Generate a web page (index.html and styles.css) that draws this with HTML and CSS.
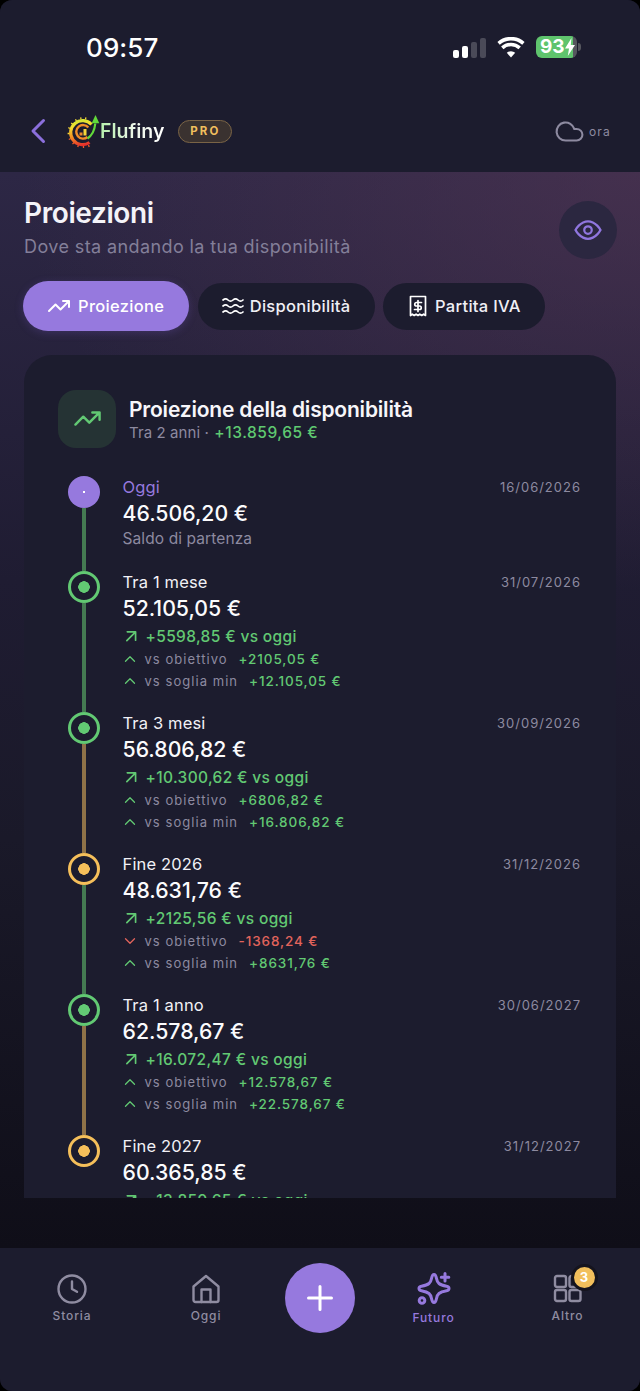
FILE: index.html
```html
<!DOCTYPE html>
<html lang="it">
<head>
<meta charset="utf-8">
<title>Flufiny – Proiezioni</title>
<link rel="stylesheet" href="styles.css">
</head>
<body>
<svg class="defs" width="0" height="0" aria-hidden="true">
  <defs>
    <linearGradient id="gauge" x1="0.7" y1="1" x2="0.5" y2="0">
      <stop offset="0" stop-color="#e5302c"/>
      <stop offset=".4" stop-color="#f48a22"/>
      <stop offset=".8" stop-color="#f6dd2e"/>
      <stop offset="1" stop-color="#d8e634"/>
    </linearGradient>
    <symbol id="i-up-right" viewBox="0 0 24 24"><path d="M7.500 7h10v10M7 17.500 17.500 7"/></symbol>
    <symbol id="i-chev-up" viewBox="0 0 24 24"><path d="m6 15 6-6 6 6"/></symbol>
    <symbol id="i-chev-down" viewBox="0 0 24 24"><path d="m6 9 6 6 6-6"/></symbol>
    <symbol id="i-trend" viewBox="0 0 24 24"><path d="M2 17 8.500 10.500 13.500 15.500 22 7M16 7h6v6"/></symbol>
  </defs>
</svg>
<div class="screen">
  <header class="top">
    <div class="status">
      <span class="time">09:57</span>
      <div class="status-icons">
        <div class="signal"><i class="b1"></i><i class="b2"></i><i class="b3"></i><i class="b4"></i></div>
        <svg class="wifi" viewBox="0 0 28 21" width="28" height="21"><path d="M14 20.500 9.800 15.800a6.200 6.200 0 0 1 8.400 0Z"/><path class="arc" d="M5.300 10.800a13 13 0 0 1 17.400 0M1.600 6.300a18.800 18.800 0 0 1 24.800 0" /></svg>
        <div class="battery"><div class="batt-body"><span>93</span><svg viewBox="0 0 10 18" width="10" height="18"><path d="M6.500 0 0 10.500h4L2.800 18 10 7H5.800Z"/></svg></div><i class="batt-tip"></i></div>
      </div>
    </div>
    <div class="brandbar">
      <div class="brand">
        <svg class="back" viewBox="0 0 16 26" width="16" height="26"><path d="M13.500 2.500 3 13l10.500 10.500"/></svg>
        <div class="logo">
          <svg viewBox="0 0 34 34" width="34" height="34">
            <g class="rays-top"><path d="M2.800 19.500H.6M3.300 14.500l-2-.8M5.800 10.300 4.200 8.900M9.500 7.200 8.500 5.300M14 5.500l-.3-2.200M18.500 5.500l.4-2.200"/></g>
            <g class="rays-low"><path d="M3.800 24.500l-2 1M7 28.500l-1.500 1.600M11.500 31l-.8 2M16.500 31.800V34M21.500 31l.7 2"/></g>
            <path class="arc1" d="M22.500 28.500A12 12 0 1 1 24.500 10.500"/>
            <path class="arc2" d="M20.500 23a6.800 6.800 0 1 1 .8-9.500"/>
            <path class="needle" d="M20.500 24.500c4.500-3 7-7.500 7.800-15"/>
            <path class="tip" d="M28.500 1l3.800 8.200h-7.600Z"/>
            <rect class="bar1" x="12.500" y="18.500" width="3" height="3"/>
            <rect class="bar2" x="16.500" y="15" width="3" height="6.500"/>
          </svg>
          <span class="logo-text">Flufiny</span>
        </div>
        <span class="pro">PRO</span>
      </div>
      <div class="sync">
        <svg viewBox="0 0 24 24" width="31" height="31"><path d="M17.500 19H9a7 7 0 1 1 6.710-9h1.790a4.500 4.500 0 1 1 0 9Z"/></svg>
        <span>ora</span>
      </div>
    </div>
  </header>

  <main class="main">
    <div class="heading">
      <div>
        <h1>Proiezioni</h1>
        <p>Dove sta andando la tua disponibilità</p>
      </div>
      <button class="eye" type="button" aria-label="Mostra">
        <svg viewBox="0 0 24 24" width="30" height="30"><path d="M2 12s3.600-7 10-7 10 7 10 7-3.600 7-10 7-10-7-10-7Z"/><circle cx="12" cy="12" r="3"/></svg>
      </button>
    </div>

    <nav class="tabs">
      <a class="tab tab-on"><svg viewBox="0 0 24 24" width="24" height="24"><use href="#i-trend"/></svg>Proiezione</a>
      <a class="tab"><svg viewBox="0 0 24 24" width="24" height="24"><path d="M2 6c2-1.600 3.300-1.600 5 0s3.300 1.600 5 0 3.300-1.600 5 0 3.300 1.600 5 0M2 12c2-1.600 3.300-1.600 5 0s3.300 1.600 5 0 3.300-1.600 5 0 3.300 1.600 5 0M2 18c2-1.600 3.300-1.600 5 0s3.300 1.600 5 0 3.300-1.600 5 0 3.300 1.600 5 0"/></svg>Disponibilità</a>
      <a class="tab"><svg viewBox="0 0 24 24" width="24" height="24"><path d="M4.500 2.500h15v19l-1.900-1.300-1.900 1.300-1.900-1.300-1.800 1.300-1.900-1.300-1.900 1.300-1.900-1.300-1.800 1.300ZM15.500 8.500h-5a1.700 1.700 0 0 0 0 3.500h3a1.700 1.700 0 0 1 0 3.500h-5M12 6.500v11"/></svg>Partita IVA</a>
    </nav>

    <div class="clip">
      <section class="card">
        <div class="card-head">
          <div class="card-icon"><svg viewBox="0 0 24 24" width="29" height="29"><use href="#i-trend"/></svg></div>
          <div class="card-title">
            <h2>Proiezione della disponibilità</h2>
            <p>Tra 2 anni · <b>+13.859,65 €</b></p>
          </div>
        </div>

        <ol class="timeline">
          <li class="item item-first line-g">
            <div class="rail"><span class="dot dot-p"></span><span class="line"></span></div>
            <div class="body">
              <div class="row"><span class="label label-p">Oggi</span><time>16/06/2026</time></div>
              <div class="amount">46.506,20 €</div>
              <div class="note">Saldo di partenza</div>
            </div>
          </li>

          <li class="item line-g">
            <div class="rail"><span class="dot dot-g"></span><span class="line"></span></div>
            <div class="body">
              <div class="row"><span class="label">Tra 1 mese</span><time>31/07/2026</time></div>
              <div class="amount">52.105,05 €</div>
              <div class="delta"><svg viewBox="0 0 24 24" width="20" height="20"><use href="#i-up-right"/></svg>+5598,85 € vs oggi</div>
              <div class="vs"><svg class="up" viewBox="0 0 24 24" width="18" height="18"><use href="#i-chev-up"/></svg><span>vs obiettivo</span><b>+2105,05 €</b></div>
              <div class="vs"><svg class="up" viewBox="0 0 24 24" width="18" height="18"><use href="#i-chev-up"/></svg><span>vs soglia min</span><b>+12.105,05 €</b></div>
            </div>
          </li>

          <li class="item line-a">
            <div class="rail"><span class="dot dot-g"></span><span class="line"></span></div>
            <div class="body">
              <div class="row"><span class="label">Tra 3 mesi</span><time>30/09/2026</time></div>
              <div class="amount">56.806,82 €</div>
              <div class="delta"><svg viewBox="0 0 24 24" width="20" height="20"><use href="#i-up-right"/></svg>+10.300,62 € vs oggi</div>
              <div class="vs"><svg class="up" viewBox="0 0 24 24" width="18" height="18"><use href="#i-chev-up"/></svg><span>vs obiettivo</span><b>+6806,82 €</b></div>
              <div class="vs"><svg class="up" viewBox="0 0 24 24" width="18" height="18"><use href="#i-chev-up"/></svg><span>vs soglia min</span><b>+16.806,82 €</b></div>
            </div>
          </li>

          <li class="item line-g">
            <div class="rail"><span class="dot dot-a"></span><span class="line"></span></div>
            <div class="body">
              <div class="row"><span class="label">Fine 2026</span><time>31/12/2026</time></div>
              <div class="amount">48.631,76 €</div>
              <div class="delta"><svg viewBox="0 0 24 24" width="20" height="20"><use href="#i-up-right"/></svg>+2125,56 € vs oggi</div>
              <div class="vs"><svg class="down" viewBox="0 0 24 24" width="18" height="18"><use href="#i-chev-down"/></svg><span>vs obiettivo</span><b class="neg">-1368,24 €</b></div>
              <div class="vs"><svg class="up" viewBox="0 0 24 24" width="18" height="18"><use href="#i-chev-up"/></svg><span>vs soglia min</span><b>+8631,76 €</b></div>
            </div>
          </li>

          <li class="item line-a">
            <div class="rail"><span class="dot dot-g"></span><span class="line"></span></div>
            <div class="body">
              <div class="row"><span class="label">Tra 1 anno</span><time>30/06/2027</time></div>
              <div class="amount">62.578,67 €</div>
              <div class="delta"><svg viewBox="0 0 24 24" width="20" height="20"><use href="#i-up-right"/></svg>+16.072,47 € vs oggi</div>
              <div class="vs"><svg class="up" viewBox="0 0 24 24" width="18" height="18"><use href="#i-chev-up"/></svg><span>vs obiettivo</span><b>+12.578,67 €</b></div>
              <div class="vs"><svg class="up" viewBox="0 0 24 24" width="18" height="18"><use href="#i-chev-up"/></svg><span>vs soglia min</span><b>+22.578,67 €</b></div>
            </div>
          </li>

          <li class="item">
            <div class="rail"><span class="dot dot-a"></span></div>
            <div class="body">
              <div class="row"><span class="label">Fine 2027</span><time>31/12/2027</time></div>
              <div class="amount">60.365,85 €</div>
              <div class="delta"><svg viewBox="0 0 24 24" width="20" height="20"><use href="#i-up-right"/></svg>+13.859,65 € vs oggi</div>
            </div>
          </li>
        </ol>
      </section>
    </div>
  </main>

  <footer class="nav">
    <a class="nav-item">
      <svg viewBox="0 0 30 30" width="30" height="30"><circle cx="15" cy="15" r="13.500"/><path d="M15 7.500V15l5 2.800"/></svg>
      <span>Storia</span>
    </a>
    <a class="nav-item">
      <svg viewBox="0 0 30 30" width="30" height="30"><path d="M15 2 27.500 12.500V26a2 2 0 0 1-2 2h-21a2 2 0 0 1-2-2V12.500Z"/><path d="M10.500 28V15.500h9V28"/></svg>
      <span>Oggi</span>
    </a>
    <div class="nav-plus">
      <button class="plus" type="button" aria-label="Aggiungi"><svg viewBox="0 0 26 26" width="26" height="26"><path d="M13 1.500v23M1.500 13h23"/></svg></button>
    </div>
    <a class="nav-item nav-on">
      <svg viewBox="0 0 34 34" width="34" height="34"><path d="M17 2.500c1.400 0 2 1.400 2.500 4 .8 4.500 2.500 6.300 10 7.800 1.600.3 2.500 1 2.500 2.200s-.9 1.900-2.500 2.200c-7.500 1.500-9.200 3.300-10 7.800-.5 2.600-1.100 4-2.500 4s-2-1.400-2.500-4c-.8-4.500-2.500-6.300-10-7.800C2.900 18.400 2 17.700 2 16.500s.9-1.900 2.500-2.200c7.500-1.500 9.200-3.300 10-7.800C15 3.900 15.600 2.500 17 2.500Z"/><path class="plus-mini" d="M28 1.500v7.500M24.300 5.200h7.500"/><circle cx="5" cy="28.500" r="2.800"/></svg>
      <span>Futuro</span>
    </a>
    <a class="nav-item">
      <span class="grid-wrap">
        <svg viewBox="0 0 30 30" width="30" height="30"><rect x="2" y="2" width="11" height="11" rx="2"/><rect x="16.500" y="2" width="11" height="11" rx="2"/><rect x="2" y="16" width="11" height="11" rx="2"/><rect x="16.500" y="16" width="11" height="11" rx="2"/></svg>
        <i class="badge">3</i>
      </span>
      <span>Altro</span>
    </a>
  </footer>
</div>
</body>
</html>
```
FILE: styles.css
```css
* { box-sizing: border-box; margin: 0; padding: 0; }
html, body { width: 640px; height: 1391px; background: #000; overflow: hidden; }
body { font-family: Inter, "Noto Sans", sans-serif; color: #fff; }
.defs { position: absolute; }
svg { display: block; flex: none; }
button { border: 0; font: inherit; }

.screen {
  width: 640px; height: 1391px; display: flex; flex-direction: column;
  overflow: hidden; border-radius: 12px; background: #0f0e18;
}

/* top */
.top { height: 172px; background: #1c1c2e; flex: none; }
.status { height: 96px; padding: 33px 59px 0 86px; display: flex; justify-content: space-between; align-items: flex-start; }
.time { font-size: 26px; font-weight: 500; line-height: 30px; letter-spacing: .1px; }
.status-icons { display: flex; align-items: center; gap: 11px; padding-top: 3px; }
.signal { display: flex; align-items: flex-end; gap: 3.500px; height: 21px; width: 33px; }
.signal i { width: 6px; border-radius: 2px; display: block; background: #fff; }
.signal .b1 { height: 8px; }
.signal .b2 { height: 12px; }
.signal .b3 { height: 16px; background: #4a4a58; }
.signal .b4 { height: 20px; background: #4a4a58; }
.wifi path { fill: #fff; }
.wifi .arc { fill: none; stroke: #fff; stroke-width: 3.600px; }
.battery { display: flex; align-items: center; gap: 1px; }
.batt-body {
  width: 41px; height: 22px; border-radius: 6px; padding-left: 4px;
  background: linear-gradient(90deg, #5fc46d 0 37px, #55565e 37px);
  display: flex; align-items: center; font-size: 19px; font-weight: 700; line-height: 22px;
}
.batt-body svg { fill: #fff; }
.batt-tip { width: 3px; height: 8px; border-radius: 0 3px 3px 0; background: #55565e; display: block; }

.brandbar { display: flex; justify-content: space-between; align-items: center; height: 70px; padding: 0 29px 0 30px; }
.brand { display: flex; align-items: center; }
.back { margin-right: 21px; }
.back path { fill: none; stroke: #8b6fdc; stroke-width: 3px; stroke-linecap: round; stroke-linejoin: round; }
.logo { display: flex; align-items: center; }
.logo svg { margin-right: -1px; }
.rays-top path { stroke: #f4d435; stroke-width: 1.300px; fill: none; }
.rays-low path { stroke: #ee5a2a; stroke-width: 1.300px; fill: none; }
.arc1 { fill: none; stroke: url(#gauge); stroke-width: 3.200px; }
.arc2 { fill: none; stroke: #f28c28; stroke-width: 2.400px; }
.needle { fill: none; stroke: #62d93a; stroke-width: 2.200px; }
.tip { fill: #62d93a; }
.bar1 { fill: #ee8a2a; }
.bar2 { fill: #f4d63a; }
.logo-text {
  font-size: 19.500px; font-weight: 600; line-height: 26px;
  background: linear-gradient(90deg, #b5f0ac, #eef6ea 55%, #ffffff);
  -webkit-background-clip: text; background-clip: text; color: transparent;
}
.pro {
  margin-left: 14px; height: 23px; width: 54px; border-radius: 12px;
  border: 1px solid #7a6446; background: #3a3230; color: #f0bf5e;
  font-size: 11.500px; font-weight: 700; letter-spacing: 2.200px; line-height: 21px; text-align: center;
}
.sync { display: flex; align-items: center; gap: 4px; color: #8d8aa0; font-size: 12px; letter-spacing: 1.200px; }
.sync svg path { fill: none; stroke: #8d8aa0; stroke-width: 1.600px; }

/* main */
.main {
  flex: 1; min-height: 0; display: flex; flex-direction: column;
  background:
    radial-gradient(620px 420px at 100% 0, rgba(85,55,85,.58), rgba(85,55,85,0) 100%),
    linear-gradient(180deg, #2d2745 0, #1f1c32 38%, #1a1929 62%, #0f0e18 100%);
}
.heading { display: flex; justify-content: space-between; align-items: flex-start; padding: 24px 23px 0 24px; height: 109px; }
h1 { font-size: 28px; font-weight: 600; line-height: 34px; letter-spacing: -.4px; color: #f4f3f8; }
.heading p { font-size: 18px; line-height: 24px; margin-top: 5px; color: #837f99; letter-spacing: .4px; }
.eye { width: 58px; height: 58px; border-radius: 50%; margin-top: 5px; background: #2b2740; display: flex; align-items: center; justify-content: center; }
.eye path, .eye circle { fill: none; stroke: #9076df; stroke-width: 1.800px; }

.tabs { display: flex; align-items: center; gap: 8.500px; padding-left: 23px; height: 50px; flex: none; }
.tab {
  display: flex; align-items: center; gap: 5px; height: 47px; padding: 0 24px 0 23px;
  border-radius: 24px; background: #1c1c2e; color: #f0eff5;
  font-size: 16.500px; font-weight: 500; letter-spacing: .3px;
}
.tab svg path { fill: none; stroke: #fff; stroke-width: 1.700px; stroke-linecap: round; stroke-linejoin: round; }
.tab svg use { fill: none; stroke: #fff; stroke-width: 2px; stroke-linecap: round; stroke-linejoin: round; }
.tab-on { height: 50px; border-radius: 25px; gap: 7px; padding: 0 25px 0 24px; background: #9679de; color: #fff; box-shadow: 0 2px 8px rgba(120,90,200,.25); }

.clip { flex: 1; min-height: 0; overflow: hidden; margin: 24px 24px 50px; border-radius: 28px 28px 0 0; }
.card { background: #1c1c2e; padding: 34px 35px 30px 34px; }
.card-head { display: flex; align-items: center; gap: 13px; height: 59px; }
.card-icon { width: 58px; height: 58px; border-radius: 18px; background: #253334; display: flex; align-items: center; justify-content: center; }
.card-icon use { fill: none; stroke: #62c973; stroke-width: 2px; stroke-linecap: round; stroke-linejoin: round; }
.card-title { padding-top: 2px; }
h2 { font-size: 21px; font-weight: 600; line-height: 26px; letter-spacing: -.2px; color: #f7f6fa; }
.card-head p { font-size: 15px; line-height: 18px; color: #8d8aa0; letter-spacing: .1px; margin-top: 1px; }
.card-head b { font-size: 15.500px; font-weight: 500; letter-spacing: .55px; margin-left: 1px; color: #5fc971; }

.timeline { list-style: none; margin-top: 28px; }
.item { display: flex; height: 141px; }
.item-first { height: 95px; }
.rail { width: 65px; flex: none; padding-left: 10px; display: flex; flex-direction: column; }
.dot { display: block; width: 32px; height: 32px; border-radius: 50%; flex: none; }
.dot-p { background: radial-gradient(circle, #fff 0 1px, #9679de 1.500px); }
.dot-g { border: 3px solid #62c973; background: radial-gradient(circle, #62c973 0 5.500px, transparent 6px); }
.dot-a { border: 3px solid #f5bf5a; background: radial-gradient(circle, #f5bf5a 0 5.500px, transparent 6px); }
.line { display: block; width: 4.500px; flex: 1; margin-left: 13.750px; }
.line-g .line { background: #447a52; }
.line-a .line { background: #8f7248; }

.body { flex: 1; min-width: 0; margin-left: -.5px; }
.row { display: flex; justify-content: space-between; align-items: center; height: 22px; padding-bottom: 1px; }
.item-first .row { padding-bottom: 0; }
.label { font-size: 16.500px; font-weight: 400; color: #f2f1f6; letter-spacing: .15px; }
.label-p { color: #9679de; }
time { font-size: 13px; color: #8d8aa0; letter-spacing: 1px; }
.amount { font-size: 21.250px; font-weight: 500; line-height: 30px; color: #fbfbfd; }
.note { font-size: 15.500px; line-height: 20px; margin-top: 1px; color: #8d8aa0; letter-spacing: .1px; }
.delta { display: flex; align-items: center; gap: 5px; height: 22px; margin-top: 2px; font-size: 15.500px; font-weight: 500; color: #62c973; letter-spacing: .35px; }
.delta svg { margin-left: -2px; }
.delta use { fill: none; stroke: #62c973; stroke-width: 2px; stroke-linecap: round; stroke-linejoin: round; }
.vs { display: flex; align-items: center; height: 20px; margin-top: 2px; font-size: 13px; letter-spacing: 1.050px; color: #8d8aa0; }
.vs svg { margin-left: -2px; margin-right: 6px; }
.vs b { margin-left: 11px; font-size: 13.500px; letter-spacing: .9px; font-weight: 500; color: #62c973; }
.vs b.neg { color: #e2645c; }
.vs .up use { fill: none; stroke: #62c973; stroke-width: 1.700px; stroke-linecap: round; stroke-linejoin: round; }
.vs .down use { fill: none; stroke: #e2645c; stroke-width: 1.700px; stroke-linecap: round; stroke-linejoin: round; }

/* nav */
.nav {
  flex: none; height: 143px; background: #1c1c2e; padding: 26px 5px 0;
  display: grid; grid-template-columns: 134px 134px 1fr 133px 135px; align-items: start;
}
.nav-item { display: flex; flex-direction: column; align-items: center; gap: 4px; color: #8f8ca1; font-size: 12px; font-weight: 500; letter-spacing: .9px; line-height: 16px; }
.nav-item svg path, .nav-item svg circle, .nav-item svg rect { fill: none; stroke: #8f8ca1; stroke-width: 2.400px; stroke-linecap: round; stroke-linejoin: round; }
.nav-on { color: #9679de; margin-top: -2px; gap: 4px; }
.nav-on svg path, .nav-on svg circle { stroke: #9679de; stroke-width: 3px; }
.nav-plus { display: flex; justify-content: center; margin-top: -11px; }
.plus { width: 70px; height: 70px; border-radius: 50%; background: #9679de; display: flex; align-items: center; justify-content: center; }
.plus path { fill: none; stroke: #fff; stroke-width: 3px; stroke-linecap: round; }
.grid-wrap { position: relative; display: block; }
.badge {
  position: absolute; top: -10px; right: -15px; width: 27px; height: 27px; border-radius: 50%;
  background: #f2bf5c; border: 3px solid #15141e;
  color: #fff; font-size: 13px; font-weight: 700; font-style: normal; line-height: 21px; text-align: center; letter-spacing: 0;
}
```
